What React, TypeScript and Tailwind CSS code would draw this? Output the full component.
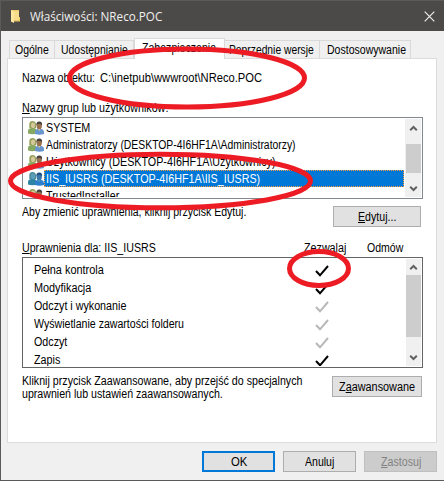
import { useLayoutEffect, useRef, useState, type ReactNode } from "react";

/* A line of dialog text, condensed horizontally to the given width. */
function Label({ w, children, className = "" }: { w: number; children: ReactNode; className?: string }) {
  const ref = useRef<HTMLSpanElement>(null);
  const [scale, setScale] = useState(1);
  useLayoutEffect(() => {
    if (ref.current) setScale(w / ref.current.offsetWidth);
  }, [w]);
  return (
    <span className={`block shrink-0 whitespace-pre ${className}`} style={{ width: w }}>
      <span ref={ref} className="inline-block origin-left" style={{ transform: `scaleX(${scale})` }}>
        {children}
      </span>
    </span>
  );
}

const U = ({ children }: { children: ReactNode }) => (
  <span className="underline decoration-1 underline-offset-[1px]">{children}</span>
);

function Users({ selected = false }: { selected?: boolean }) {
  const c = selected
    ? { h1: "#4d8a9c", f1: "#5c9fb8", b1: "#2f83a5", h2: "#1c4e80", f2: "#3a76a8", b2: "#2f80cc" }
    : { h1: "#93a158", f1: "#d6c79c", b1: "#86a860", h2: "#44403c", f2: "#98714f", b2: "#6796cf" };
  return (
    <svg className="h-4 w-4 shrink-0" viewBox="0 0 16 16">
      <path d="M0 13.5V11q0-2.5 3-3h3.5q2 .5 2 3v2.500q-4 1.500-8.500 0Z" fill={c.b1} />
      <path d="M1.300 8V4Q1.500 1 4.500 1T8 4v4Z" fill={c.h1} />
      <ellipse cx="5" cy="5.300" rx="2" ry="2.800" fill={c.f1} />
      <path d="M7 14v-2.500Q7 9.300 9.500 9h4q2.500.5 2.500 3v2q-4.500 1.500-9 0Z" fill={c.b2} />
      <ellipse cx="11.200" cy="5.800" rx="2.700" ry="3.600" fill={c.f2} />
      <path d="M8.400 5.500Q8 1.500 11.300 1.500T14 5.500Q13 3.600 11 3.700T8.400 5.500Z" fill={c.h2} />
      <path d="m10 9 1.300 2L12.600 9Z" fill={c.f1} />
    </svg>
  );
}

const Chevron = ({ down = false }: { down?: boolean }) => (
  <svg className={`h-[7px] w-[9px] ${down ? "rotate-180" : ""}`} viewBox="0 0 9 7">
    <path d="M1.200 5.200 4.500 2 7.800 5.200" fill="none" stroke="#606060" strokeWidth="2" />
  </svg>
);

const tabs = [
  { text: "Ogólne", w: 34, cls: "w-[46px] pl-[5px]" },
  { text: "Udostępnianie", w: 67, cls: "w-[79px] pl-[6px]" },
  { text: "Zabezpieczenia", w: 74, cls: "w-[91px]", active: true },
  { text: "Poprzednie wersje", w: 85, cls: "w-[95px] pl-[4px]" },
  { text: "Dostosowywanie", w: 79, cls: "w-[91px] pl-[7px]" },
];

const groups = [
  { text: "SYSTEM", w: 44 },
  { text: "Administratorzy (DESKTOP-4I6HF1A\\Administratorzy)", w: 250 },
  { text: "Użytkownicy (DESKTOP-4I6HF1A\\Użytkownicy)", w: 230 },
  { text: "IIS_IUSRS (DESKTOP-4I6HF1A\\IIS_IUSRS)", w: 214, selected: true },
  { text: "TrustedInstaller", w: 73 },
];

const permissions = [
  { text: "Pełna kontrola", w: 70, on: true },
  { text: "Modyfikacja", w: 57, on: true },
  { text: "Odczyt i wykonanie", w: 92, on: false },
  { text: "Wyświetlanie zawartości folderu", w: 150, on: false },
  { text: "Odczyt", w: 33, on: false },
  { text: "Zapis", w: 26, on: true },
];

const button = "flex h-[21px] items-center justify-center border border-[#adadad] bg-[#e1e1e1]";

export default function App() {
  return (
    <div className="relative flex h-[481px] w-[444px] flex-col overflow-hidden border-b border-l border-[#5c5a58] bg-[#f0f0f0] font-['Liberation_Sans',Arial,sans-serif] text-[12px] leading-[14px] text-black">
      <header className="flex h-[31px] shrink-0 items-center border-t border-[#5c5a58] bg-[#4c4a48] pl-[9px] pr-[9px]">
        <svg className="h-4 w-3 shrink-0" viewBox="0 0 12 16">
          <path d="M1 2h8v7h1v4.500H1Z" fill="#ecc768" />
          <path d="M4 3h5v9H4Z" fill="#f7dc8c" />
          <path d="m1 2 3 1.500V15l-3-1.500Z" fill="#ffe7a0" />
        </svg>
        <Label w={132} className="ml-2 font-['Open_Sans','Noto_Sans',sans-serif] text-[13px] leading-[18px] text-[#f0f0f0]">
          Właściwości: NReco.POC
        </Label>
        <svg className="ml-auto h-[11px] w-[11px]" viewBox="0 0 11 11">
          <path d="m.7.7 9.600 9.600m0-9.600L.7 10.300" stroke="#ececec" strokeWidth="1.200" />
        </svg>
      </header>

      <nav className="ml-[8px] mt-[7px] flex h-[20px] shrink-0 items-end">
        {tabs.map((t) =>
          t.active ? (
            <div key={t.text} className="relative z-10 -mb-px flex h-[21px] w-[91px] shrink-0 border-x border-t border-[#d9d9d9] bg-white pl-[7px] pt-[2px]">
              <Label w={t.w}>{t.text}</Label>
            </div>
          ) : (
            <div key={t.text} className={`flex h-[18px] shrink-0 border-r border-t border-[#d9d9d9] pt-[2px] first:border-l ${t.cls}`}>
              <Label w={t.w}>{t.text}</Label>
            </div>
          )
        )}
      </nav>

      <main className="ml-[6px] flex h-[385px] w-[430px] shrink-0 flex-col border border-[#dcdcdc] bg-white pl-[14px]">
        <div className="mt-[12px] flex gap-[5px]">
          <Label w={73}>Nazwa obiektu:</Label>
          <Label w={162}>{"C:\\inetpub\\wwwroot\\NReco.POC"}</Label>
        </div>
        <Label w={146} className="mt-[16px]">
          <U>N</U>azwy grup lub użytkowników:
        </Label>

        <div className="mt-[2px] flex h-[82px] w-[401px] shrink-0 border border-[#828790] p-px">
          <div className="flex min-w-0 grow flex-col overflow-hidden pl-[4px]">
            {groups.map((g) => (
              <div key={g.text} className="flex h-[17px] shrink-0 items-center">
                <Users selected={g.selected} />
                <div className={`flex h-[17px] grow items-center pl-[1px] ${g.selected ? "border border-dotted border-[#ff9c3c] bg-[#0078d7] text-white" : "border border-transparent"}`}>
                  <Label w={g.w}>{g.text}</Label>
                </div>
              </div>
            ))}
          </div>
          <div className="ml-px flex w-[16px] shrink-0 flex-col items-center bg-[#f0f0f0]">
            <div className="flex h-[25px] items-center pb-[7px]"><Chevron /></div>
            <div className="h-[29px] w-[15px] bg-[#cdcdcd]" />
            <div className="mt-auto flex h-[17px] items-center"><Chevron down /></div>
          </div>
        </div>

        <div className="flex h-[35px] shrink-0">
          <Label w={224} className="mt-[6px]">Aby zmienić uprawnienia, kliknij przycisk Edytuj.</Label>
          <div className={`${button} ml-[87px] mt-[7px] w-[88px]`}>
            <Label w={38}><U>E</U>dytuj...</Label>
          </div>
        </div>

        <div className="mt-[7px] flex h-[16px] shrink-0">
          <Label w={134}><U>U</U>prawnienia dla: IIS_IUSRS</Label>
          <Label w={42} className="ml-[148px]">Zezwalaj</Label>
          <Label w={36} className="ml-[21px]">Odmów</Label>
        </div>

        <div className="flex h-[111px] w-[401px] shrink-0 border border-[#646464] p-px">
          <div className="flex grow flex-col overflow-hidden pl-[10px] pt-[2px]">
            {permissions.map((p) => (
              <div key={p.text} className="flex h-[18px] shrink-0 items-center">
                <div className="w-[150px] shrink-0">
                  <Label w={p.w}>{p.text}</Label>
                </div>
                <svg className="ml-[131px] mt-[2px] h-[12px] w-[14px]" viewBox="0 0 14 12">
                  <path d="m1 6 4 4.300L13 1" fill="none" stroke={p.on ? "#000" : "#b8b8b8"} strokeWidth="2" />
                </svg>
              </div>
            ))}
          </div>
          <div className="flex w-[15px] shrink-0 flex-col items-center bg-[#f0f0f0]">
            <div className="flex h-[16px] items-center"><Chevron /></div>
            <div className="h-[62px] w-[15px] bg-[#cdcdcd]" />
            <div className="mt-auto flex h-[17px] items-center"><Chevron down /></div>
          </div>
        </div>

        <div className="mt-[7px] flex">
          <div className="flex w-[310px] flex-col leading-[13px]">
            <Label w={280}>Kliknij przycisk Zaawansowane, aby przejść do specjalnych</Label>
            <Label w={201}>uprawnień lub ustawień zaawansowanych.</Label>
          </div>
          <div className={`${button} mt-px w-[90px]`}>
            <Label w={76}>Z<U>a</U>awansowane</Label>
          </div>
        </div>
      </main>

      <footer className="mt-[8px] flex gap-[8px] pl-[201px]">
        <div className="flex h-[21px] w-[73px] items-center justify-center border-2 border-[#0078d7] bg-[#e1e1e1]">
          <Label w={16}>OK</Label>
        </div>
        <div className={`${button} w-[73px]`}>
          <Label w={29}>Anuluj</Label>
        </div>
        <div className="flex h-[21px] w-[73px] items-center justify-center border border-[#bfbfbf] bg-[#cccccc] text-[#838383]">
          <Label w={40}><U>Z</U>astosuj</Label>
        </div>
      </footer>

      <svg className="pointer-events-none absolute -left-px top-0 z-20 h-[481px] w-[444px]" viewBox="0 0 444 481" fill="none" stroke="#ed1c24" strokeWidth="5">
        <ellipse cx="187" cy="78" rx="117.500" ry="29" />
        <ellipse cx="160.500" cy="181" rx="150" ry="26.800" />
        <ellipse cx="319" cy="268.500" rx="29.500" ry="17" />
      </svg>
    </div>
  );
}
